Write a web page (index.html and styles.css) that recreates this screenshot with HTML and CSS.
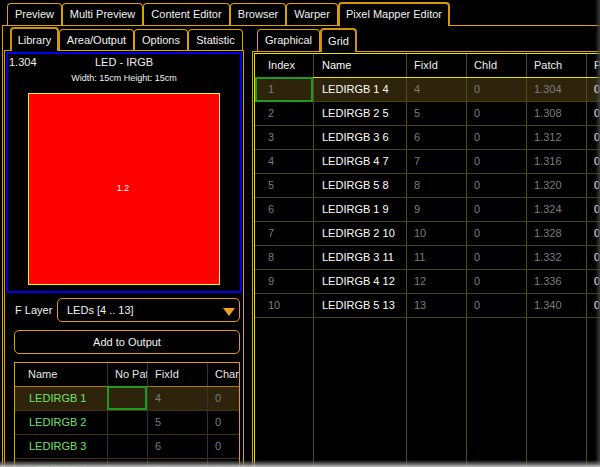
FILE: index.html
```html
<!DOCTYPE html>
<html>
<head>
<meta charset="utf-8">
<link rel="stylesheet" href="styles.css">
</head>
<body>
<div class="app">
  <div class="tabbar">
    <div class="tab w55">Preview</div>
    <div class="tab w81">Multi Preview</div>
    <div class="tab w87">Content Editor</div>
    <div class="tab w56">Browser</div>
    <div class="tab w52">Warper</div>
    <div class="tab active w112">Pixel Mapper Editor</div>
  </div>
  <div class="frame">
    <section class="lpanel">
      <div class="subtabs">
        <div class="stab active w49">Library</div>
        <div class="stab w75">Area/Output</div>
        <div class="stab w54">Options</div>
        <div class="stab w55">Statistic</div>
      </div>
      <div class="lbody">
        <div class="preview">
          <span class="pv-id">1.304</span>
          <div class="pv-title">LED - IRGB</div>
          <div class="pv-sub">Width: 15cm Height: 15cm</div>
          <div class="pixel"><span>1.2</span></div>
        </div>
        <div class="layer-row">
          <span>F Layer</span>
          <div class="dropdown">
            <span>LEDs [4 .. 13]</span>
            <svg viewBox="0 0 12 8" width="12" height="8"><polygon points="0,0 12,0 6,8" fill="#f0a020"/></svg>
          </div>
        </div>
        <div class="btn">Add to Output</div>
        <div class="ltable">
          <div class="lrow lhead">
            <div class="lc ln">Name</div>
            <div class="lc lp">No Patch</div>
            <div class="lc lf">FixId</div>
            <div class="lc lch">Channel</div>
          </div>
          <div class="lrow hl">
            <div class="lc ln green">LEDIRGB 1</div>
            <div class="lc lp sel"></div>
            <div class="lc lf dim">4</div>
            <div class="lc lch dim">0</div>
          </div>
          <div class="lrow">
            <div class="lc ln green">LEDIRGB 2</div>
            <div class="lc lp"></div>
            <div class="lc lf dim">5</div>
            <div class="lc lch dim">0</div>
          </div>
          <div class="lrow">
            <div class="lc ln green">LEDIRGB 3</div>
            <div class="lc lp"></div>
            <div class="lc lf dim">6</div>
            <div class="lc lch dim">0</div>
          </div>
          <div class="lrow">
            <div class="lc ln green">LEDIRGB 4</div>
            <div class="lc lp"></div>
            <div class="lc lf dim">7</div>
            <div class="lc lch dim">0</div>
          </div>
        </div>
      </div>
    </section>
    <section class="rpanel">
      <div class="subtabs rtabs">
        <div class="stab w63">Graphical</div>
        <div class="stab active w37">Grid</div>
      </div>
      <div class="rbody">
        <div class="grid">
          <div class="grow ghead">
            <div class="gc gi">Index</div>
            <div class="gc gn">Name</div>
            <div class="gc gv">FixId</div>
            <div class="gc gv">ChId</div>
            <div class="gc gv">Patch</div>
            <div class="gc gx">Position</div>
          </div>
          <div class="grow hl">
            <div class="gc gi dim sel">1</div>
            <div class="gc gn">LEDIRGB 1 4</div>
            <div class="gc gv dim">4</div>
            <div class="gc gv dim">0</div>
            <div class="gc gv dim">1.304</div>
            <div class="gc gx">0.000</div>
          </div>
          <div class="grow">
            <div class="gc gi dim">2</div>
            <div class="gc gn">LEDIRGB 2 5</div>
            <div class="gc gv dim">5</div>
            <div class="gc gv dim">0</div>
            <div class="gc gv dim">1.308</div>
            <div class="gc gx">0.000</div>
          </div>
          <div class="grow">
            <div class="gc gi dim">3</div>
            <div class="gc gn">LEDIRGB 3 6</div>
            <div class="gc gv dim">6</div>
            <div class="gc gv dim">0</div>
            <div class="gc gv dim">1.312</div>
            <div class="gc gx">0.000</div>
          </div>
          <div class="grow">
            <div class="gc gi dim">4</div>
            <div class="gc gn">LEDIRGB 4 7</div>
            <div class="gc gv dim">7</div>
            <div class="gc gv dim">0</div>
            <div class="gc gv dim">1.316</div>
            <div class="gc gx">0.000</div>
          </div>
          <div class="grow">
            <div class="gc gi dim">5</div>
            <div class="gc gn">LEDIRGB 5 8</div>
            <div class="gc gv dim">8</div>
            <div class="gc gv dim">0</div>
            <div class="gc gv dim">1.320</div>
            <div class="gc gx">0.000</div>
          </div>
          <div class="grow">
            <div class="gc gi dim">6</div>
            <div class="gc gn">LEDIRGB 1 9</div>
            <div class="gc gv dim">9</div>
            <div class="gc gv dim">0</div>
            <div class="gc gv dim">1.324</div>
            <div class="gc gx">0.000</div>
          </div>
          <div class="grow">
            <div class="gc gi dim">7</div>
            <div class="gc gn">LEDIRGB 2 10</div>
            <div class="gc gv dim">10</div>
            <div class="gc gv dim">0</div>
            <div class="gc gv dim">1.328</div>
            <div class="gc gx">0.000</div>
          </div>
          <div class="grow">
            <div class="gc gi dim">8</div>
            <div class="gc gn">LEDIRGB 3 11</div>
            <div class="gc gv dim">11</div>
            <div class="gc gv dim">0</div>
            <div class="gc gv dim">1.332</div>
            <div class="gc gx">0.000</div>
          </div>
          <div class="grow">
            <div class="gc gi dim">9</div>
            <div class="gc gn">LEDIRGB 4 12</div>
            <div class="gc gv dim">12</div>
            <div class="gc gv dim">0</div>
            <div class="gc gv dim">1.336</div>
            <div class="gc gx">0.000</div>
          </div>
          <div class="grow">
            <div class="gc gi dim">10</div>
            <div class="gc gn">LEDIRGB 5 13</div>
            <div class="gc gv dim">13</div>
            <div class="gc gv dim">0</div>
            <div class="gc gv dim">1.340</div>
            <div class="gc gx">0.000</div>
          </div>
          <div class="grow gfill">
            <div class="gc gi"></div>
            <div class="gc gn"></div>
            <div class="gc gv"></div>
            <div class="gc gv"></div>
            <div class="gc gv"></div>
            <div class="gc gx"></div>
          </div>
        </div>
      </div>
    </section>
  </div>
  <div class="shade-r"></div>
  <div class="shade-b"></div>
</div>
</body>
</html>
```

FILE: styles.css
```css
* { box-sizing: border-box; margin: 0; padding: 0; }
html, body { width: 600px; height: 467px; overflow: hidden; background: #000; }
body {
  font-family: "Liberation Sans", Arial, sans-serif;
  font-size: 11px;
  color: #f2f2f2;
}
.app {
  position: relative;
  width: 600px;
  height: 467px;
  display: flex;
  flex-direction: column;
  overflow: hidden;
}

/* top tabs */
.tabbar { display: flex; align-items: flex-end; height: 25px; padding-left: 7px; flex: none; }
.tab {
  flex: none;
  height: 22px;
  border: 1px solid #e0a000;
  border-bottom: none;
  border-radius: 4px 4px 0 0;
  text-align: center;
  line-height: 21px;
  white-space: nowrap;
}
.tab.active {
  height: 24px;
  margin-bottom: -1px;
  border: 2px solid #d49a08;
  border-bottom: none;
  background: #000;
  position: relative;
  z-index: 2;
  line-height: 20px;
}
.w37 { width: 37px; } .w49 { width: 49px; } .w52 { width: 52px; } .w54 { width: 54px; }
.w55 { width: 55px; } .w56 { width: 56px; } .w63 { width: 63px; } .w75 { width: 75px; }
.w81 { width: 81px; } .w87 { width: 87px; } .w112 { width: 112px; }

.frame {
  flex: 1;
  min-height: 0;
  margin-left: 2px;
  width: 598px;
  border-top: 1px solid #e2a600;
  border-left: 1px solid #e0a000;
  display: flex;
}

/* sub tabs */
.subtabs { display: flex; align-items: flex-end; height: 24px; padding-left: 6px; flex: none; }
.rtabs { height: 25px; padding-left: 5px; }
.stab {
  flex: none;
  height: 21px;
  border: 1px solid #e0a000;
  border-bottom: none;
  border-radius: 4px 4px 0 0;
  text-align: center;
  line-height: 20px;
  white-space: nowrap;
}
.rtabs .stab { height: 22px; line-height: 21px; }
.stab.active, .rtabs .stab.active {
  height: 24px;
  margin-bottom: -1px;
  border: 2px solid #cf9408;
  border-bottom: none;
  background: #000;
  position: relative;
  z-index: 2;
  line-height: 22px;
}

/* left panel */
.lpanel { flex: none; width: 240px; margin-left: 1px; display: flex; flex-direction: column; }
.lbody {
  flex: 1;
  min-height: 0;
  border: 1px solid #e0a000;
  border-bottom: none;
  display: flex;
  flex-direction: column;
}
.preview {
  flex: none;
  position: relative;
  margin: 1px 1px 0;
  height: 241px;
  border: 2px solid #0000f0;
  display: flex;
  flex-direction: column;
  align-items: center;
}
.pv-id { position: absolute; left: 1px; top: 0; line-height: 16px; }
.pv-title { line-height: 16px; }
.pv-sub { font-size: 9px; line-height: 16px; }
.pixel {
  margin-top: 7px;
  width: 192px;
  height: 192px;
  background: #ff0000;
  border: 1px solid #ffff00;
  display: flex;
  align-items: center;
  justify-content: center;
  padding: 0 2px 3px 0;
  font-size: 9px;
  color: #fff;
}
.layer-row {
  flex: none;
  display: flex;
  align-items: center;
  justify-content: space-between;
  margin-top: 5px;
  height: 24px;
  padding: 0 3px 0 10px;
}
.dropdown {
  width: 183px;
  height: 24px;
  border: 1px solid #e0a000;
  border-radius: 5px;
  display: flex;
  align-items: center;
  justify-content: space-between;
  padding: 0 4px 0 9px;
}
.dropdown svg { margin-top: 3px; }
.btn {
  flex: none;
  margin: 8px 3px 0 9px;
  height: 24px;
  border: 1px solid #e0a000;
  border-radius: 5px;
  text-align: center;
  line-height: 22px;
}
.ltable {
  flex: 1;
  min-height: 0;
  margin: 8px 3px 0 9px;
  border: 1px solid #e0a000;
  border-bottom: none;
  overflow: hidden;
}
.lrow { display: flex; height: 24px; border-bottom: 1px solid #4a3300; }
.lhead { border-bottom-color: #b27c00; color: #e8e8e8; }
.lc {
  flex: none;
  line-height: 23px;
  white-space: nowrap;
  overflow: hidden;
  border-right: 1px solid #333;
  padding-left: 7px;
}
.ln { width: 93px; padding-left: 13px; }
.lp { width: 40px; }
.lf { width: 60px; }
.lch { flex: 1; border-right: none; }
.green { color: #6ee36e; padding-left: 14px; }

/* right panel */
.rpanel { flex: 1; min-width: 0; margin-left: 8px; display: flex; flex-direction: column; }
.rbody {
  flex: 1;
  min-height: 0;
  border-left: 1px solid #e0a000;
  border-top: 1px solid #e2a800;
  padding: 1px 0 0 1px;
  display: flex;
}
.grid {
  flex: 1;
  min-width: 0;
  border-left: 1px solid #e8e000;
  border-top: 1px solid #e8e800;
  display: flex;
  flex-direction: column;
  overflow: hidden;
}
.grow { flex: none; display: flex; height: 24px; border-bottom: 1px solid #45450f; }
.ghead { border-bottom-color: #e6e600; color: #f0f0f0; }
.gfill { flex: 1; border-bottom: none; }
.gc {
  flex: none;
  line-height: 23px;
  white-space: nowrap;
  overflow: hidden;
  border-right: 1px solid #4d4d14;
  padding-left: 7px;
}
.gi { width: 59px; padding-left: 13px; }
.gn { width: 93px; padding-left: 8px; color: #fff; }
.gv { width: 60px; }
.gx { flex: 1; border-right: none; color: #fff; }

.dim { color: #7c7c7c; }
.hl { background: #2e240b; }
.sel { position: relative; overflow: visible; }
.sel::after {
  content: "";
  position: absolute;
  left: 0;
  top: -1px;
  right: 0;
  bottom: -1px;
  border: 2px solid #1f9c1f;
}
.lp.sel::after { left: -1px; right: 0; bottom: 0; }

/* window shadow */
.shade-r {
  position: absolute;
  top: 0; right: 0; bottom: 0;
  width: 5px;
  background: linear-gradient(to right, rgba(60,60,60,0), rgba(70,70,70,0.85));
  z-index: 5;
}
.shade-b {
  position: absolute;
  left: 0; right: 0; bottom: 0;
  height: 7px;
  background: linear-gradient(to bottom, rgba(40,40,40,0), rgba(120,120,120,0.8) 55%, rgba(205,205,205,0.95));
  z-index: 6;
}
```
